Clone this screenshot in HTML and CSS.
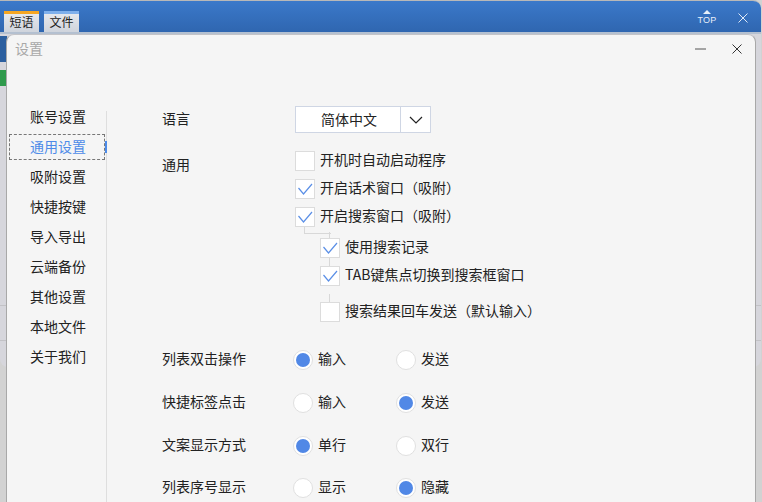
FILE: index.html
```html
<!DOCTYPE html>
<html lang="zh">
<head>
<meta charset="utf-8">
<title>设置</title>
<link rel="stylesheet" href="styles.css">
</head>
<body>
<div class="backdrop">
  <div class="app">
    <div class="app-bar">
      <div class="tabs">
        <div class="tab tab-active">短语</div>
        <div class="tab">文件</div>
      </div>
      <div class="app-actions">
        <div class="top-btn">
          <svg width="16" height="6" viewBox="0 0 16 6"><path d="M8 0 L12 4 H4 Z" fill="#e8f0fa"/></svg>
          <span>TOP</span>
        </div>
        <svg class="app-close" width="10" height="10" viewBox="0 0 10 10"><path d="M0.5 0.5 L9.5 9.5 M9.5 0.5 L0.5 9.5" stroke="#dfe9f6" stroke-width="1" fill="none"/></svg>
      </div>
    </div>
    <div class="app-strip-blue"></div>
    <div class="app-strip-green"></div>
  </div>
  <div class="dialog">
    <div class="title-row">
      <div class="title">设置</div>
      <div class="win-actions">
        <svg width="11" height="2" viewBox="0 0 11 2"><path d="M0 1 H11" stroke="#555" stroke-width="1"/></svg>
        <svg width="10" height="10" viewBox="0 0 10 10"><path d="M0.5 0.5 L9.5 9.5 M9.5 0.5 L0.5 9.5" stroke="#333" stroke-width="1" fill="none"/></svg>
      </div>
    </div>
    <div class="body">
      <nav class="nav">
        <div class="nav-item">账号设置</div>
        <div class="nav-item nav-current">通用设置</div>
        <div class="nav-item">吸附设置</div>
        <div class="nav-item">快捷按键</div>
        <div class="nav-item">导入导出</div>
        <div class="nav-item">云端备份</div>
        <div class="nav-item">其他设置</div>
        <div class="nav-item">本地文件</div>
        <div class="nav-item">关于我们</div>
      </nav>
      <main class="content">
        <div class="lang-row">
          <div class="label">语言</div>
          <div class="select">
            <div class="select-value">简体中文</div>
            <div class="select-arrow">
              <svg width="14" height="8" viewBox="0 0 14 8"><path d="M1 1 L7 7 L13 1" stroke="#222" stroke-width="1.2" fill="none"/></svg>
            </div>
          </div>
        </div>
        <div class="general-row">
          <div class="label">通用</div>
          <div class="checks">
            <div class="check-row"><span class="box"></span><span class="txt">开机时自动启动程序</span></div>
            <div class="check-row"><span class="box"><svg width="18" height="18" viewBox="0 0 18 18"><path d="M2.5 8 L7.5 14 L16 4" stroke="#5b8fe6" stroke-width="1.2" fill="none"/></svg></span><span class="txt">开启话术窗口（吸附）</span></div>
            <div class="check-row"><span class="box"><svg width="18" height="18" viewBox="0 0 18 18"><path d="M2.5 8 L7.5 14 L16 4" stroke="#5b8fe6" stroke-width="1.2" fill="none"/></svg></span><span class="txt">开启搜索窗口（吸附）</span></div>
            <div class="sub-checks">
              <div class="check-row sub-first"><span class="box"><svg width="18" height="18" viewBox="0 0 18 18"><path d="M2.5 8 L7.5 14 L16 4" stroke="#5b8fe6" stroke-width="1.2" fill="none"/></svg></span><span class="txt">使用搜索记录</span></div>
              <div class="check-row sub-second"><span class="box"><svg width="18" height="18" viewBox="0 0 18 18"><path d="M2.5 8 L7.5 14 L16 4" stroke="#5b8fe6" stroke-width="1.2" fill="none"/></svg></span><span class="txt">TAB键焦点切换到搜索框窗口</span></div>
              <div class="check-row sub-third"><span class="box"></span><span class="txt">搜索结果回车发送（默认输入）</span></div>
            </div>
          </div>
        </div>
        <div class="radio-row">
          <div class="label">列表双击操作</div>
          <div class="radio-opt"><span class="radio radio-on"></span><span class="txt">输入</span></div>
          <div class="radio-opt"><span class="radio"></span><span class="txt">发送</span></div>
        </div>
        <div class="radio-row">
          <div class="label">快捷标签点击</div>
          <div class="radio-opt"><span class="radio"></span><span class="txt">输入</span></div>
          <div class="radio-opt"><span class="radio radio-on"></span><span class="txt">发送</span></div>
        </div>
        <div class="radio-row radio-row-tight">
          <div class="label">文案显示方式</div>
          <div class="radio-opt"><span class="radio radio-on"></span><span class="txt">单行</span></div>
          <div class="radio-opt"><span class="radio"></span><span class="txt">双行</span></div>
        </div>
        <div class="radio-row">
          <div class="label">列表序号显示</div>
          <div class="radio-opt"><span class="radio"></span><span class="txt">显示</span></div>
          <div class="radio-opt"><span class="radio radio-on"></span><span class="txt">隐藏</span></div>
        </div>
      </main>
    </div>
  </div>
</div>
</body>
</html>
```
FILE: styles.css
```css
* { box-sizing: border-box; }
html, body { margin: 0; padding: 0; }
body {
  width: 762px;
  height: 502px;
  overflow: hidden;
  font-family: "Noto Sans CJK SC", "Liberation Sans", sans-serif;
  font-size: 14px;
  color: #222;
}
.backdrop {
  position: relative;
  width: 762px;
  height: 502px;
  background: #d2d2d2;
  overflow: hidden;
}
.app {
  width: 761px;
  height: 367px;
  border-radius: 0 8px 8px 8px;
  background:
    linear-gradient(#c2c2c6, #c2c2c6) 0 304px / 100% 1px no-repeat,
    linear-gradient(#c2c2c6, #c2c2c6) 0 339px / 100% 1px no-repeat,
    #d6d6dc;
  border-top: 1px solid #b8b8b8;
  overflow: hidden;
}
.app-bar {
  height: 33px;
  background: linear-gradient(#3b79ca, #2f66b0);
  display: flex;
  justify-content: space-between;
  padding: 10px 0 0 4px;
  border-bottom: 2px solid #b4c0d0;
}
.tabs { display: flex; gap: 5px; }
.tab {
  width: 35px;
  height: 21px;
  background: linear-gradient(#e6e8ec, #cfd4dc);
  border-top: 3px solid #7fb0ec;
  text-align: center;
  font-size: 12px;
  line-height: 15px;
  color: #222;
}
.tab-active { border-top-color: #f5a623; }
.app-actions {
  display: flex;
  align-items: flex-start;
  gap: 23px;
  padding: 0 13px 0 0;
  margin-top: -1px;
}
.top-btn {
  display: flex;
  flex-direction: column;
  align-items: center;
  width: 16px;
  color: #e8f0fa;
  font-family: "Liberation Sans", sans-serif;
  font-size: 9px;
  letter-spacing: 0.3px;
  line-height: 8px;
}
.app-close { margin-top: 3px; }
.app-strip-blue {
  width: 7px;
  height: 26px;
  margin-top: 2px;
  background: #2c5f9f;
}
.app-strip-green {
  width: 7px;
  height: 16px;
  margin-top: 8px;
  background: #2f9a4c;
}
.dialog {
  position: absolute;
  left: 6px;
  top: 34px;
  width: 750px;
  height: 480px;
  background: #f5f5f5;
  border-radius: 8px 8px 0 0;
  border-top: 1px solid #c4c4c8;
  border-left: 1px solid #a8a8a8;
  border-right: 1px solid #a8a8a8;
  display: flex;
  flex-direction: column;
}
.title-row {
  flex: none;
  height: 69px;
  display: flex;
  justify-content: space-between;
  padding: 3px 13px 0 8px;
}
.title { font-size: 14px; line-height: 20px; color: #a8a8a8; }
.win-actions {
  display: flex;
  gap: 26px;
  align-items: center;
  height: 22px;
}
.body { display: flex; flex: 1; min-height: 0; }
.nav {
  position: relative;
  width: 100px;
  flex: none;
  display: flex;
  flex-direction: column;
  padding: 0 0 0 2px;
}
.nav::before {
  content: "";
  position: absolute;
  right: 0;
  top: 7px;
  bottom: 0;
  width: 1px;
  background: #dedede;
}
.nav-item {
  width: 96px;
  height: 26px;
  margin-bottom: 4px;
  padding-left: 20px;
  font-size: 14px;
  line-height: 22px;
  color: #222;
  border: 1px solid transparent;
}
.nav-current {
  position: relative;
  color: #4d8be8;
  border: 1px dashed #777;
}
.nav-current::after {
  content: "";
  position: absolute;
  right: -3px;
  top: 6px;
  width: 2px;
  height: 12px;
  background: #4d8be8;
}
.content { flex: 1; padding: 2px 0 0 55px; min-width: 0; }
.label { width: 133px; flex: none; font-size: 14px; color: #222; }
.lang-row { display: flex; align-items: center; height: 27px; }
.lang-row .label { position: relative; top: -2px; }
.select {
  width: 136px;
  height: 27px;
  display: flex;
  background: #fff;
  border: 1px solid #cfd6e4;
}
.select-value { flex: 1; text-align: center; line-height: 24px; font-size: 14px; padding-left: 2px; }
.select-arrow {
  width: 30px;
  border-left: 1px solid #cfd6e4;
  display: flex;
  align-items: center;
  justify-content: center;
}
.general-row { display: flex; margin-top: 18px; }
.general-row .label { line-height: 20px; padding-top: 3px; }
.checks { display: flex; flex-direction: column; }
.check-row { display: flex; align-items: center; gap: 5px; height: 20px; margin-bottom: 8px; font-size: 14px; position: relative; }
.txt { position: relative; top: -2px; }
.box {
  width: 20px;
  height: 20px;
  background: #fff;
  border: 1px solid #dcdcdc;
  flex: none;
  display: flex;
}
.sub-checks { padding-left: 25px; margin-top: 3px; }
.sub-first::before, .sub-second::before, .sub-third::before {
  content: "";
  position: absolute;
  background: #d8d8d8;
  width: 1px;
  left: 9px;
}
.sub-first::before { top: -6px; height: 6px; }
.sub-first::after {
  content: "";
  position: absolute;
  left: -16px;
  top: -11px;
  width: 26px;
  height: 6px;
  border-left: 1px solid #d8d8d8;
  border-bottom: 1px solid #d8d8d8;
}
.sub-second::before { top: -8px; height: 8px; }
.sub-third { margin-top: 16px; margin-bottom: 0; }
.sub-third::before { top: -8px; height: 8px; }
.radio-row { display: flex; align-items: center; height: 20px; margin-bottom: 23px; }
.radio-row-tight { margin-bottom: 22px; }
.radio-row .label { width: 131px; position: relative; top: -2px; }
.general-row + .radio-row { margin-top: 28px; }
.radio-opt { width: 103px; display: flex; align-items: center; gap: 5px; font-size: 14px; }
.radio {
  width: 20px;
  height: 20px;
  border-radius: 50%;
  background: #fff;
  border: 1px solid #e0e0e0;
  flex: none;
  position: relative;
}
.radio-on::after {
  content: "";
  position: absolute;
  left: 2px;
  top: 2px;
  width: 14px;
  height: 14px;
  border-radius: 50%;
  background: #5188e6;
}
```
